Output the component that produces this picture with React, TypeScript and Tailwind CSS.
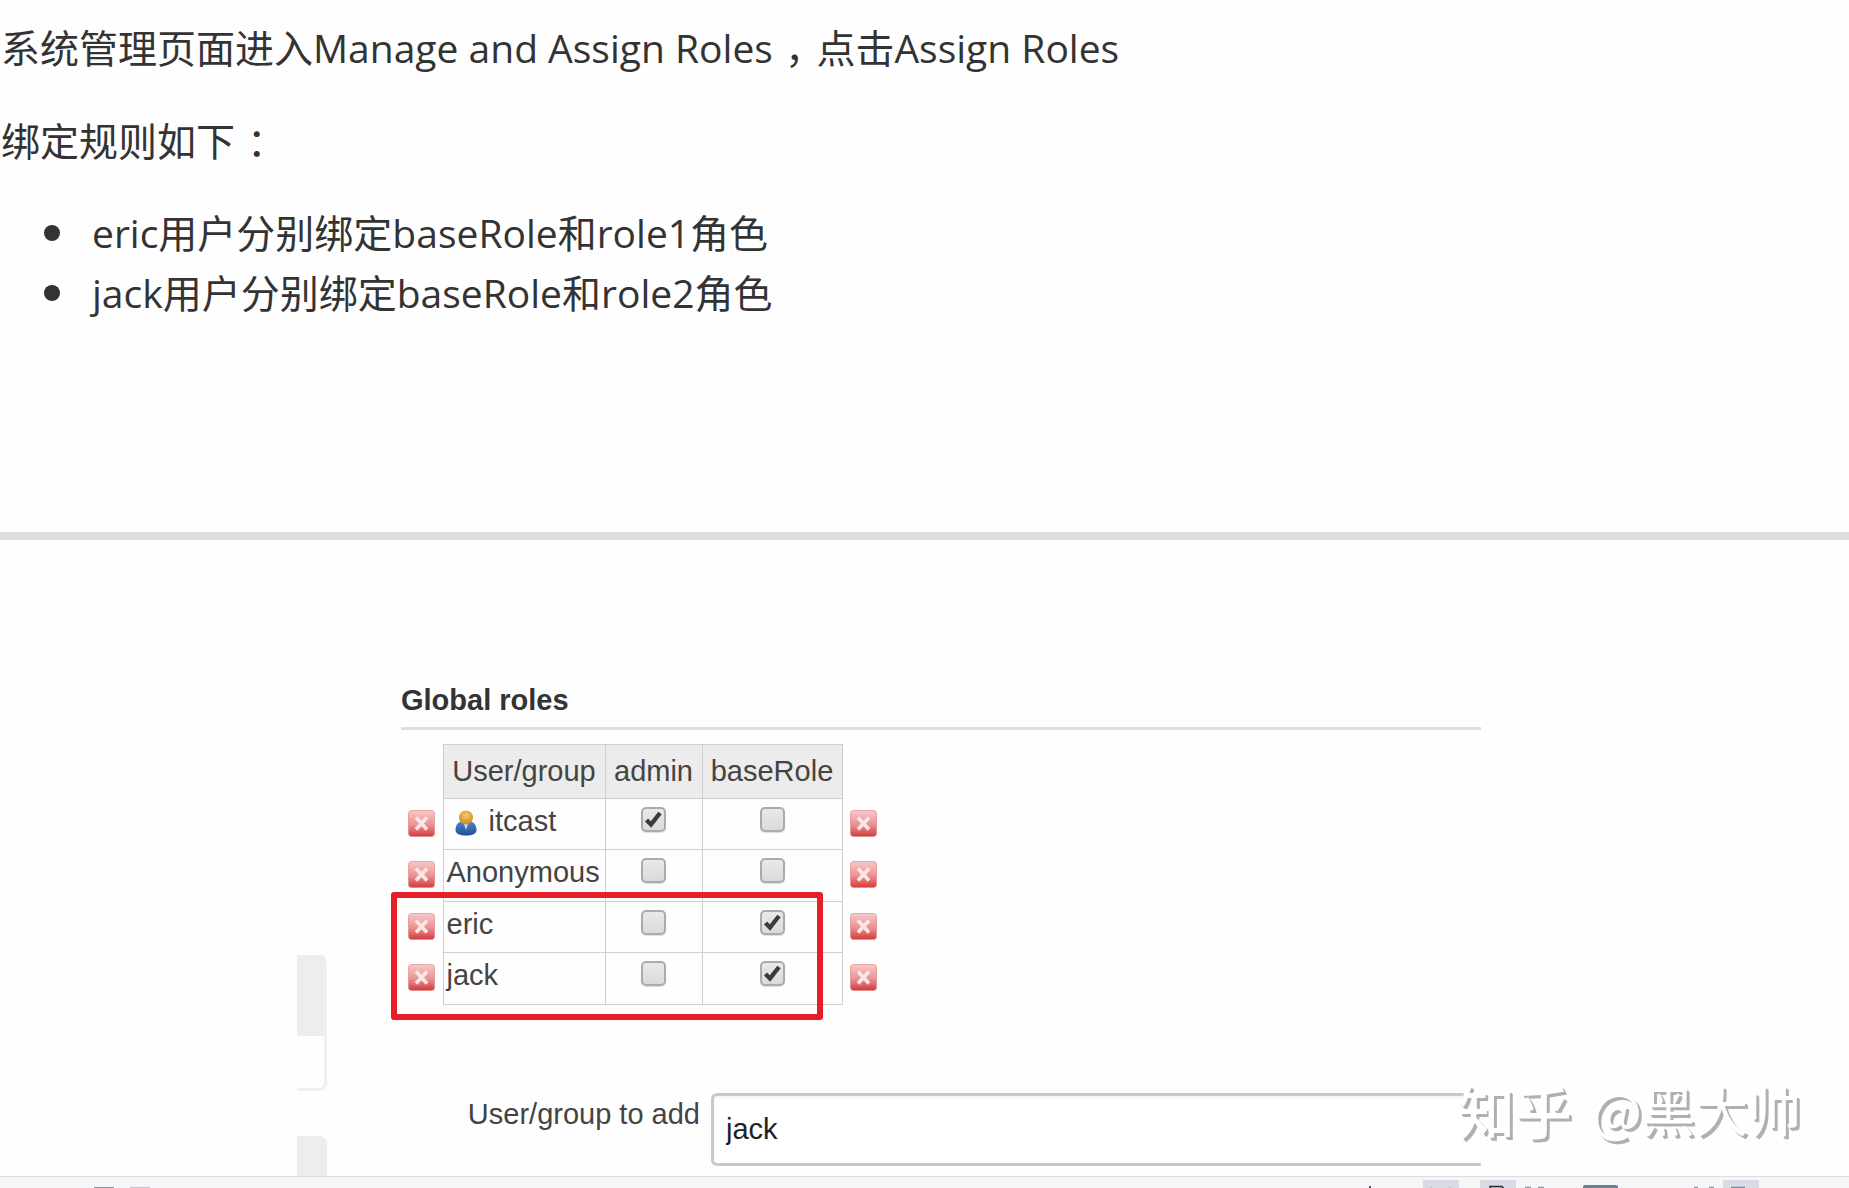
import { useState } from "react";

type Row = { name: string; person?: boolean; admin: boolean; baseRole: boolean };

const initialRows: Row[] = [
  { name: "itcast", person: true, admin: true, baseRole: false },
  { name: "Anonymous", admin: false, baseRole: false },
  { name: "eric", admin: false, baseRole: true },
  { name: "jack", admin: false, baseRole: true },
];

const bindings = ["eric用户分别绑定baseRole和role1角色", "jack用户分别绑定baseRole和role2角色"];

function DeleteIcon() {
  return (
    <svg viewBox="0 0 27 27" className="block size-[27px]" aria-hidden="true">
      <defs>
        <linearGradient id="del" x1="0" y1="0" x2="0" y2="1">
          <stop offset="0" stopColor="#f6c9c9" />
          <stop offset="0.55" stopColor="#ea9292" />
          <stop offset="1" stopColor="#d23a3c" />
        </linearGradient>
      </defs>
      <rect x="0.5" y="0.5" width="26" height="26" rx="3" fill="url(#del)" stroke="#e08a8a" strokeOpacity="0.7" />
      <path d="M8 7.500 L19 19.500 M19 7.500 L8 19.500" stroke="#fbe6e6" strokeWidth="3.600" />
    </svg>
  );
}

function PersonIcon() {
  return (
    <svg viewBox="0 0 22 26" className="h-[26px] w-[22px] shrink-0" aria-hidden="true">
      <defs>
        <radialGradient id="head" cx="0.5" cy="0.35" r="0.65">
          <stop offset="0" stopColor="#f6cb6a" />
          <stop offset="1" stopColor="#c98a1c" />
        </radialGradient>
        <linearGradient id="body" x1="0" y1="0" x2="0" y2="1">
          <stop offset="0" stopColor="#4f86c6" />
          <stop offset="1" stopColor="#1f4f94" />
        </linearGradient>
      </defs>
      <path d="M0.500 20 C0.500 15 3 12 7 11.500 L15 11.500 C19 12 21.500 15 21.500 20 C21.500 24 17 25.500 11 25.500 C5 25.500 0.500 24 0.500 20 Z" fill="url(#body)" />
      <path d="M8.500 13 L13.500 13 L11 20 Z" fill="#c3d8ee" />
      <circle cx="11" cy="7.500" r="7" fill="url(#head)" />
    </svg>
  );
}

function Tick({ label, checked, onChange }: { label: string; checked: boolean; onChange: () => void }) {
  return (
    <span className="relative mx-auto block size-[25px]">
      <input
        type="checkbox"
        aria-label={label}
        checked={checked}
        onChange={onChange}
        className="block size-[25px] appearance-none rounded-[5px] border-2 border-[#ababab] bg-linear-to-b from-[#e9e9e9] to-[#dadada] shadow-[0_1px_1px_#00000022]"
      />
      {checked && (
        <svg viewBox="0 0 25 25" className="pointer-events-none absolute inset-0" aria-hidden="true">
          <path d="M5.500 13 L10 17.500 L19 6" fill="none" stroke="#3c3c3c" strokeWidth="4.400" />
        </svg>
      )}
    </span>
  );
}

function DeleteButton({ name }: { name: string }) {
  return (
    <button type="button" aria-label={`Remove ${name}`} className="mx-auto mt-[11px] block">
      <DeleteIcon />
    </button>
  );
}

function GlobalRoles() {
  const [rows, setRows] = useState(initialRows);
  const toggle = (i: number, key: "admin" | "baseRole") =>
    setRows(rows.map((r, j) => (j === i ? { ...r, [key]: !r[key] } : r)));
  const cell = "border border-[#cfcfcf] p-0 align-top";

  return (
    <div className="relative w-fit">
      <table className="table-fixed border-collapse leading-[34px]">
        <colgroup>
          <col className="w-[42px]" />
          <col className="w-[162px]" />
          <col className="w-[97px]" />
          <col className="w-[140px]" />
          <col className="w-[42px]" />
        </colgroup>
        <thead>
          <tr className="h-[54px]">
            <td />
            <th className={`${cell} bg-[#ececec] pt-[9px] font-normal`}>User/group</th>
            <th className={`${cell} bg-[#ececec] pt-[9px] font-normal`}>admin</th>
            <th className={`${cell} bg-[#ececec] pt-[9px] font-normal`}>baseRole</th>
            <td />
          </tr>
        </thead>
        <tbody>
          {rows.map((r, i) => (
            <tr key={r.name} className="h-[51px] even:h-[52px]">
              <td className="p-0 align-top"><DeleteButton name={r.name} /></td>
              <td className={`${cell} pt-[5px] pl-[3px]`}>
                <span className="flex items-start">
                  {r.person && <span className="mt-[6px] mr-3 ml-2"><PersonIcon /></span>}
                  {r.name}
                </span>
              </td>
              <td className={`${cell} pt-2`}>
                <Tick label={`${r.name} admin`} checked={r.admin} onChange={() => toggle(i, "admin")} />
              </td>
              <td className={`${cell} pt-2`}>
                <Tick label={`${r.name} baseRole`} checked={r.baseRole} onChange={() => toggle(i, "baseRole")} />
              </td>
              <td className="p-0 align-top"><DeleteButton name={r.name} /></td>
            </tr>
          ))}
        </tbody>
      </table>
      <div className="pointer-events-none absolute top-[148px] -left-[10px] h-[128px] w-[432px] rounded-[3px] border-6 border-[#e51f27]" />
    </div>
  );
}

function StatusBar() {
  return (
    <footer className="h-3 overflow-hidden border-t border-[#dcdee1] bg-[#f5f6f8]">
      <svg className="block h-3 w-full" aria-hidden="true">
        <path d="M94 10.500 H114" stroke="#8a8f96" strokeWidth="1" />
        <path d="M130 10.500 H150" stroke="#c3c5c8" strokeWidth="1" />
        <path d="M1370 9 V12" stroke="#20242c" strokeWidth="1.500" />
        <rect x="1423" y="3" width="36" height="9" fill="#d8dde5" />
        <path d="M1430 9.500 l2 2 M1451 9.500 l-2 2" stroke="#a9b2c2" strokeWidth="1" />
        <rect x="1480" y="3" width="36" height="9" fill="#d8dde5" />
        <rect x="1723" y="3" width="36" height="9" fill="#d8dde5" />
        <path d="M1490 12 V9.500 H1502 L1504 12" fill="none" stroke="#20242c" strokeWidth="1.500" />
        <path d="M1525 10.500 h6 M1538 10.500 h6 M1694 10.500 h4 M1709 10.500 h5" stroke="#8f9297" strokeWidth="1.500" />
        <rect x="1583" y="8" width="35" height="8" rx="2" fill="#717d95" />
        <path d="M1731 10.500 h14" stroke="#7b8496" strokeWidth="1.500" />
      </svg>
    </footer>
  );
}

// Half-width punctuation with even space on both sides.
function Mark({ children }: { children: string }) {
  return <span className="mx-3 [font-feature-settings:'halt']">{children}</span>;
}

export default function App() {
  const [user, setUser] = useState("jack");
  return (
    <div className="relative flex h-screen flex-col overflow-hidden bg-[#fefefe] text-[#333]">
      <article className="h-[532px] shrink-0 pt-[18px] pl-px font-['Open_Sans','Noto_Sans_CJK_SC',sans-serif] text-[39px] leading-[60px]">
        <p className="mb-[33px]">
          系统管理页面进入Manage and Assign Roles<Mark>，</Mark>点击Assign Roles
        </p>
        <p className="mb-8">绑定规则如下<Mark>：</Mark></p>
        <ul>
          {bindings.map((text) => (
            <li
              key={text}
              className="flex items-center pl-[43px] before:mr-8 before:size-4 before:shrink-0 before:rounded-full before:bg-[#333] before:content-['']"
            >
              {text}
            </li>
          ))}
        </ul>
      </article>
      <hr className="h-2 shrink-0 border-0 bg-[#dedede]" />
      <main className="flex min-h-0 flex-1 overflow-hidden pl-[297px] font-['Liberation_Sans',Arial,sans-serif] text-[29px] leading-[34px] text-[#444]">
        <aside className="w-[30px] shrink-0 pt-[415px]">
          <div className="mb-[45px] h-[136px] rounded-r-lg border-r-3 border-b-3 border-[#f0f0f0]">
            <div className="h-[81px] bg-[#ededed]" />
          </div>
          <div className="h-20 rounded-tr-lg bg-[#ededed]" />
        </aside>
        <section className="mr-[368px] ml-[74px] min-w-0 flex-1 pt-[143px]">
          <h2 className="border-b-3 border-[#dedede] pb-[10px] font-bold text-[#333]">Global roles</h2>
          <div className="mt-[14px]">
            <GlobalRoles />
          </div>
          <div className="mt-[88px] flex items-start">
            <label htmlFor="user" className="w-[310px] shrink-0 pt-1 pr-[11px] text-right">User/group to add</label>
            <input
              id="user"
              value={user}
              onChange={(e) => setUser(e.target.value)}
              className="h-[73px] min-w-0 flex-1 rounded-l-md border-3 border-r-0 border-[#c9c9c9] bg-white px-3 text-[#222] shadow-[inset_0_2px_2px_#0000000d] outline-none"
            />
          </div>
        </section>
      </main>
      <div className="pointer-events-none absolute right-12 bottom-[41px] flex items-center gap-5 font-['Noto_Sans_CJK_SC',sans-serif] text-white [text-shadow:2px_2px_0_#b0b0b0,3px_3px_0_#b0b0b0]">
        <span className="text-[57px] leading-[76px] font-medium">知乎</span>
        <span className="text-[53px] leading-[76px]">@黑大帅</span>
      </div>
      <StatusBar />
    </div>
  );
}
